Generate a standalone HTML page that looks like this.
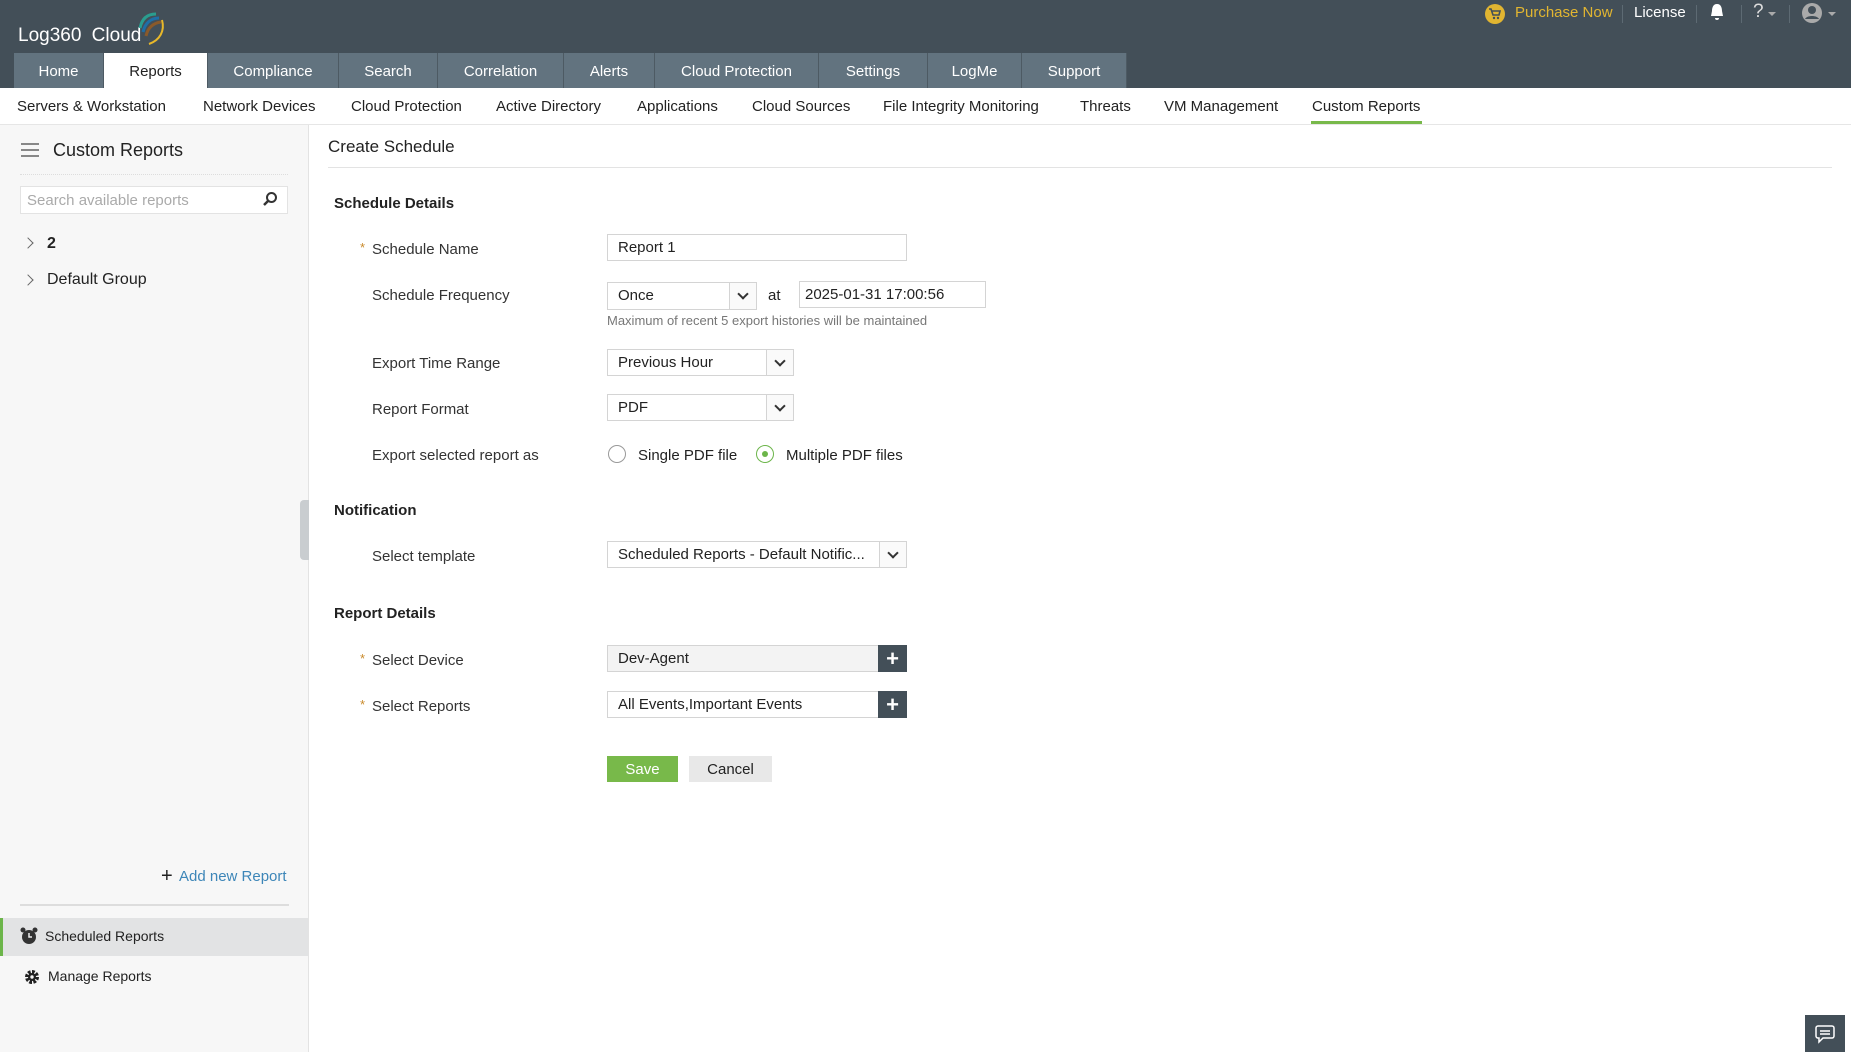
<!DOCTYPE html>
<html><head><meta charset="utf-8"><style>
*{box-sizing:border-box;margin:0;padding:0}
body{width:1851px;height:1052px;overflow:hidden;font-family:"Liberation Sans",sans-serif;font-size:15px;color:#222;background:#fff;position:relative}
.a{position:absolute}
#hdr{left:0;top:0;width:1851px;height:88px;background:#434f58}
.tab{position:absolute;top:53px;height:35px;background:#62737f;color:#fff;font-size:15px;text-align:center;line-height:37px;border-right:1px solid #4d5a63}
.tab.on{background:#fff;color:#222}
.sub{position:absolute;top:98px;font-size:15px;color:#222}
#side{left:0;top:125px;width:309px;height:927px;background:#f7f7f7;border-right:1px solid #e3e3e3}
.lbl{position:absolute;left:372px;font-size:15px;color:#333;margin-top:1px}
.star{position:absolute;left:360px;color:#c98a2c;font-size:13px}
.h{position:absolute;left:334px;font-weight:bold;font-size:15px;color:#222;margin-top:1px}
.inp{position:absolute;left:607px;border:1px solid #d4d4d4;background:#fff;font-size:15px;padding-left:10px;color:#222}
.dd{position:absolute;right:0;top:0;bottom:0;width:27px;border-left:1px solid #d4d4d4;background:#fafafa}
.dd:after{content:"";position:absolute;left:9px;top:7px;width:6px;height:6px;border-right:2px solid #333;border-bottom:2px solid #333;transform:rotate(45deg)}
.plus{position:absolute;right:-1px;top:-1px;width:29px;bottom:-1px;background:#434f58;color:#fff;font-weight:bold;font-size:22px;text-align:center;line-height:27px}
</style></head><body>
<div id="hdr" class="a"></div>
<div class="a" style="left:18px;top:25px;color:#fff;font-size:19px;word-spacing:5px">Log360 Cloud</div>
<svg class="a" style="left:128px;top:6px" width="40" height="42" viewBox="0 0 40 42"><path d="M12 22 C14 12 20 8 28 8" stroke="#2a9d8f" stroke-width="3" fill="none"/><path d="M15 26 C17 17 23 12 31 12" stroke="#1e6fa8" stroke-width="3" fill="none"/><path d="M18 30 C20 21 26 17 33 16" stroke="#8a5a2b" stroke-width="3" fill="none"/><path d="M21 38 C32 34 37 25 34 14" stroke="#e8b82a" stroke-width="2" fill="none"/></svg>
<div class="a" style="left:1485px;top:4px;width:20px;height:20px;border-radius:50%;background:#e1b531"></div>
<svg class="a" style="left:1488px;top:7px" width="14" height="14" viewBox="0 0 14 14"><path d="M1 2h2l2 6h6l1-4H4" stroke="#434f58" stroke-width="1.6" fill="none"/><circle cx="6" cy="11" r="1.2" fill="#434f58"/><circle cx="10" cy="11" r="1.2" fill="#434f58"/></svg>
<div class="a" style="left:1515px;top:4px;color:#e1b531;font-size:15px">Purchase Now</div>
<div class="a" style="left:1622px;top:5px;width:1px;height:18px;background:#5d6a73"></div>
<div class="a" style="left:1634px;top:4px;color:#fff;font-size:15px">License</div>
<div class="a" style="left:1696px;top:5px;width:1px;height:18px;background:#5d6a73"></div>
<svg class="a" style="left:1709px;top:3px" width="16" height="19" viewBox="0 0 16 19"><path d="M8 1C4 1 3 5 3 8L2 13H14L13 8C13 5 12 1 8 1Z M6 15a2 2 0 0 0 4 0Z" fill="#fff"/></svg>
<div class="a" style="left:1741px;top:5px;width:1px;height:18px;background:#5d6a73"></div>
<div class="a" style="left:1753px;top:1px;color:#ddd;font-size:19px">?</div>
<div class="a" style="left:1768px;top:12px;border:4px solid transparent;border-top-color:#aaa"></div>
<div class="a" style="left:1789px;top:5px;width:1px;height:18px;background:#5d6a73"></div>
<svg class="a" style="left:1801px;top:2px" width="22" height="22" viewBox="0 0 22 22"><circle cx="11" cy="11" r="10" fill="#aaa"/><circle cx="11" cy="8" r="4" fill="#434f58"/><path d="M4 17c2-4 12-4 14 0" fill="#434f58"/></svg>
<div class="a" style="left:1828px;top:12px;border:4px solid transparent;border-top-color:#aaa"></div>

<div class="tab" style="left:14px;width:90px">Home</div>
<div class="tab on" style="left:104px;width:104px">Reports</div>
<div class="tab" style="left:208px;width:131px">Compliance</div>
<div class="tab" style="left:339px;width:99px">Search</div>
<div class="tab" style="left:438px;width:126px">Correlation</div>
<div class="tab" style="left:564px;width:91px">Alerts</div>
<div class="tab" style="left:655px;width:164px">Cloud Protection</div>
<div class="tab" style="left:819px;width:109px">Settings</div>
<div class="tab" style="left:928px;width:94px">LogMe</div>
<div class="tab" style="left:1022px;width:105px">Support</div>

<div class="sub" style="left:17px">Servers &amp; Workstation</div>
<div class="sub" style="left:203px">Network Devices</div>
<div class="sub" style="left:351px">Cloud Protection</div>
<div class="sub" style="left:496px">Active Directory</div>
<div class="sub" style="left:637px">Applications</div>
<div class="sub" style="left:752px">Cloud Sources</div>
<div class="sub" style="left:883px">File Integrity Monitoring</div>
<div class="sub" style="left:1080px">Threats</div>
<div class="sub" style="left:1164px">VM Management</div>
<div class="sub" style="left:1312px">Custom Reports</div>
<div class="a" style="left:1311px;top:121px;width:111px;height:3px;background:#78b94a"></div>
<div class="a" style="left:0;top:124px;width:1851px;height:1px;background:#e6e6e6"></div>

<div id="side" class="a"></div>
<div class="a" style="left:21px;top:143px;width:18px;height:2px;background:#888;box-shadow:0 6px 0 #888,0 12px 0 #888"></div>
<div class="a" style="left:53px;top:140px;font-size:18px;color:#222">Custom Reports</div>
<div class="a" style="left:20px;top:174px;width:268px;height:1px;border-top:1px dotted #ddd"></div>
<div class="a" style="left:20px;top:186px;width:268px;height:28px;background:#fff;border:1px solid #e3e3e3;color:#aaa;font-size:15px;padding:5px 6px">Search available reports</div>
<svg class="a" style="left:262px;top:191px" width="16" height="16" viewBox="0 0 16 16"><circle cx="9.5" cy="6.5" r="4.5" stroke="#333" stroke-width="2" fill="none"/><path d="M6 10L2 14" stroke="#333" stroke-width="2.5"/></svg>
<div class="a" style="left:24px;top:239px;width:8px;height:8px;border-right:1.5px solid #666;border-top:1.5px solid #666;transform:rotate(45deg)"></div>
<div class="a" style="left:47px;top:235px;font-weight:bold;font-size:16px">2</div>
<div class="a" style="left:24px;top:276px;width:8px;height:8px;border-right:1.5px solid #666;border-top:1.5px solid #666;transform:rotate(45deg)"></div>
<div class="a" style="left:47px;top:271px;font-size:16px">Default Group</div>
<div class="a" style="left:161px;top:865px;font-size:20px;color:#222">+</div>
<div class="a" style="left:179px;top:868px;font-size:15px;color:#3d86b8">Add new Report</div>
<div class="a" style="left:20px;top:904px;width:269px;height:2px;background:#ddd"></div>
<div class="a" style="left:0;top:918px;width:308px;height:38px;background:#e2e3e4;border-left:3px solid #6cb54a"></div>
<svg class="a" style="left:20px;top:927px" width="18" height="19" viewBox="0 0 18 19"><circle cx="9" cy="10" r="7" fill="#333"/><circle cx="3" cy="3" r="2.5" fill="#333"/><circle cx="15" cy="3" r="2.5" fill="#333"/><path d="M9 6v4h3" stroke="#eee" stroke-width="1.5" fill="none"/></svg>
<div class="a" style="left:45px;top:928px;font-size:14px;color:#222">Scheduled Reports</div>
<svg class="a" style="left:24px;top:969px" width="16" height="16" viewBox="0 0 16 16"><circle cx="8" cy="8" r="5" fill="none" stroke="#222" stroke-width="4" stroke-dasharray="2.6 1.3"/><circle cx="8" cy="8" r="4" fill="#222"/><circle cx="8" cy="8" r="1.7" fill="#f7f7f7"/></svg>
<div class="a" style="left:48px;top:968px;font-size:14px;color:#222">Manage Reports</div>
<div class="a" style="left:300px;top:500px;width:9px;height:60px;background:#c9cdd0;border-radius:4px 0 0 4px"></div>

<div class="a" style="left:328px;top:137px;font-size:17px;color:#222">Create Schedule</div>
<div class="a" style="left:328px;top:167px;width:1504px;height:1px;background:#e3e3e3"></div>
<div class="h" style="top:194px">Schedule Details</div>
<div class="star" style="top:240px">*</div><div class="lbl" style="top:240px">Schedule Name</div>
<div class="inp" style="top:234px;width:300px;height:27px;line-height:25px">Report 1</div>
<div class="lbl" style="top:286px">Schedule Frequency</div>
<div class="inp" style="top:282px;width:150px;height:28px;line-height:26px">Once<span class="dd"></span></div>
<div class="a" style="left:768px;top:287px">at</div>
<div class="inp" style="left:799px;top:281px;width:187px;height:27px;line-height:25px;padding-left:5px">2025-01-31 17:00:56</div>
<div class="a" style="left:607px;top:313px;font-size:13px;color:#777">Maximum of recent 5 export histories will be maintained</div>
<div class="lbl" style="top:354px">Export Time Range</div>
<div class="inp" style="top:349px;width:187px;height:27px;line-height:25px">Previous Hour<span class="dd"></span></div>
<div class="lbl" style="top:400px">Report Format</div>
<div class="inp" style="top:394px;width:187px;height:27px;line-height:25px">PDF<span class="dd"></span></div>
<div class="lbl" style="top:446px">Export selected report as</div>
<div class="a" style="left:608px;top:445px;width:18px;height:18px;border:1px solid #999;border-radius:50%"></div>
<div class="a" style="left:638px;top:447px">Single PDF file</div>
<div class="a" style="left:756px;top:445px;width:18px;height:18px;border:1px solid #6cb54a;border-radius:50%"></div>
<div class="a" style="left:762px;top:451px;width:6px;height:6px;background:#6cb54a;border-radius:50%"></div>
<div class="a" style="left:786px;top:447px">Multiple PDF files</div>
<div class="h" style="top:501px">Notification</div>
<div class="lbl" style="top:547px">Select template</div>
<div class="inp" style="top:541px;width:300px;height:27px;line-height:25px">Scheduled Reports - Default Notific...<span class="dd"></span></div>
<div class="h" style="top:604px">Report Details</div>
<div class="star" style="top:651px">*</div><div class="lbl" style="top:651px">Select Device</div>
<div class="inp" style="top:645px;width:300px;height:27px;line-height:25px;background:#f3f3f3">Dev-Agent<span class="plus">+</span></div>
<div class="star" style="top:697px">*</div><div class="lbl" style="top:697px">Select Reports</div>
<div class="inp" style="top:691px;width:300px;height:27px;line-height:25px">All Events,Important Events<span class="plus">+</span></div>
<div class="a" style="left:607px;top:756px;width:71px;height:26px;background:#78b94a;color:#fff;text-align:center;line-height:27px">Save</div>
<div class="a" style="left:689px;top:756px;width:83px;height:26px;background:#e8e8e8;color:#222;text-align:center;line-height:27px">Cancel</div>
<div class="a" style="left:1805px;top:1015px;width:40px;height:37px;background:#434f58"></div>
<svg class="a" style="left:1815px;top:1024px" width="20" height="20" viewBox="0 0 20 20"><path d="M3 2h14a2 2 0 0 1 2 2v8a2 2 0 0 1-2 2H8l-4 4v-4H3a2 2 0 0 1-2-2V4a2 2 0 0 1 2-2Z" fill="none" stroke="#fff" stroke-width="1.5"/><path d="M5 7h10M5 10h10" stroke="#fff" stroke-width="1.5"/></svg>
</body></html>
